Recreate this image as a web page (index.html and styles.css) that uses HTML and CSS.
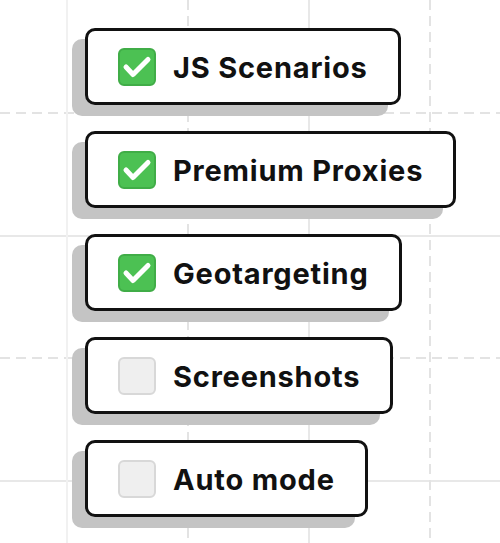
FILE: index.html
```html
<!DOCTYPE html>
<html lang="en">
<head>
<meta charset="utf-8">
<title>Features</title>
<link rel="stylesheet" href="styles.css">
</head>
<body>
<div class="canvas">
  <ul class="list">
    <li class="card">
      <span class="box checked"><svg viewBox="0 0 34 34" class="tick"><polyline points="6,17 13,24.5 28,9.5"/></svg></span>
      <span class="label">JS Scenarios</span>
    </li>
    <li class="card">
      <span class="box checked"><svg viewBox="0 0 34 34" class="tick"><polyline points="6,17 13,24.5 28,9.5"/></svg></span>
      <span class="label">Premium Proxies</span>
    </li>
    <li class="card">
      <span class="box checked"><svg viewBox="0 0 34 34" class="tick"><polyline points="6,17 13,24.5 28,9.5"/></svg></span>
      <span class="label">Geotargeting</span>
    </li>
    <li class="card">
      <span class="box"></span>
      <span class="label">Screenshots</span>
    </li>
    <li class="card">
      <span class="box"></span>
      <span class="label">Auto mode</span>
    </li>
  </ul>
</div>
</body>
</html>
```
FILE: styles.css
```css
html, body {
  margin: 0;
  padding: 0;
}
body {
  width: 500px;
  height: 543px;
  overflow: hidden;
  background: #fff;
  font-family: Inter, "Noto Sans", sans-serif;
}
.canvas {
  width: 500px;
  height: 543px;
  background-color: #fff;
  background-image:
    linear-gradient(#f1f1f1, #f1f1f1),
    linear-gradient(to bottom, #e3e3e3 10px, transparent 10px),
    linear-gradient(#e8e8e8, #e8e8e8),
    linear-gradient(to bottom, #e3e3e3 10px, transparent 10px),
    linear-gradient(to right, #e3e3e3 10px, transparent 10px),
    linear-gradient(#e8e8e8, #e8e8e8),
    linear-gradient(to right, #e3e3e3 10px, transparent 10px),
    linear-gradient(#e8e8e8, #e8e8e8);
  background-size:
    2px 100%,
    2px 16px,
    2px 100%,
    2px 16px,
    16px 2px,
    100% 2px,
    16px 2px,
    100% 2px;
  background-position:
    66px 0,
    187px 0,
    308px 0,
    429px 0,
    0 112px,
    0 235px,
    0 357px,
    0 480px;
  background-repeat:
    no-repeat,
    repeat-y,
    no-repeat,
    repeat-y,
    repeat-x,
    no-repeat,
    repeat-x,
    no-repeat;
}
.list {
  list-style: none;
  margin: 0;
  padding: 28px 0 0 85px;
  display: flex;
  flex-direction: column;
  align-items: flex-start;
  gap: 26px;
}
.card {
  box-sizing: border-box;
  height: 77px;
  display: flex;
  align-items: center;
  gap: 17px;
  padding: 0 30px;
  border: 3px solid #111;
  border-radius: 10px;
  background: #fff;
  box-shadow: -13px 11px 0 #c4c4c4;
}
.box {
  box-sizing: border-box;
  width: 38px;
  height: 38px;
  border-radius: 6px;
  border: 2px solid #d8d8d8;
  background: #efefef;
  display: flex;
  flex: none;
}
.box.checked {
  background: #4cc153;
  border-color: #40ad47;
}
.tick {
  width: 34px;
  height: 34px;
  fill: none;
  stroke: #fff;
  stroke-width: 5;
  stroke-linecap: round;
  stroke-linejoin: round;
}
.label {
  font-size: 29px;
  font-weight: 700;
  color: #111;
  line-height: 1;
  letter-spacing: 0.8px;
  padding-top: 1px;
}
```
